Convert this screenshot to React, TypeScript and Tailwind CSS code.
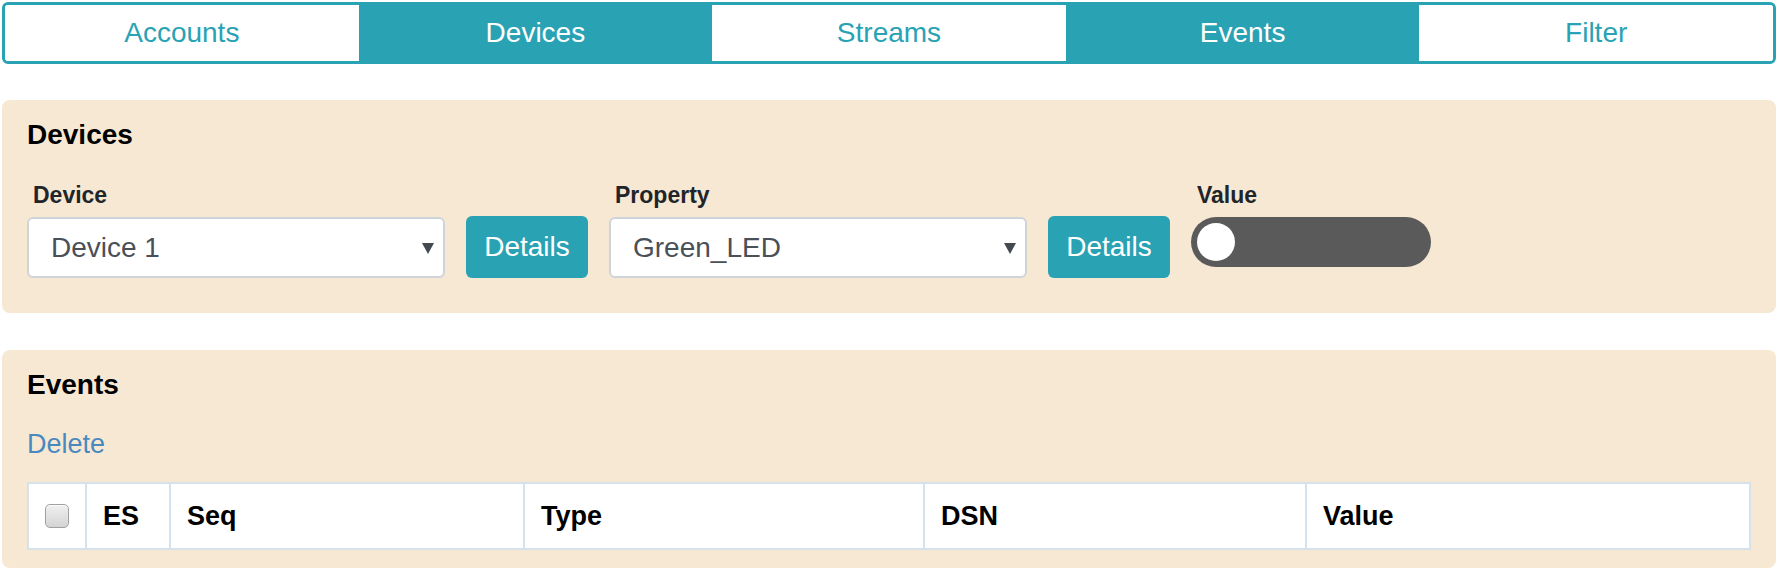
import React from "react";

const tabs = [
  { name: "Accounts", active: false },
  { name: "Devices", active: true },
  { name: "Streams", active: false },
  { name: "Events", active: true },
  { name: "Filter", active: false },
];

function Select({ value }: { value: string }) {
  return (
    <div className="relative flex h-[61px] w-[418px] items-center rounded-[6px] border-2 border-[#cfd4da] bg-white pl-[22px] text-[28px] text-[#495057]">
      <span>{value}</span>
      <svg
        className="absolute right-[9px] top-[24px]"
        width="12"
        height="11"
        viewBox="0 0 12 11"
      >
        <polygon points="0,0 12,0 6,11" fill="#444a50" />
      </svg>
    </div>
  );
}

function DetailsButton() {
  return (
    <button className="flex h-[62px] w-[122px] items-center justify-center rounded-[6px] bg-[#29a2b4] text-[28px] text-white">
      Details
    </button>
  );
}

function Label({ children }: { children: React.ReactNode }) {
  return (
    <div className="pl-[6px] text-[23px] font-bold leading-[1.2] text-[#212529]">
      {children}
    </div>
  );
}

export default function App() {
  return (
    <div
      className="h-[572px] w-[1778px] overflow-hidden bg-white"
      style={{ fontFamily: '"Liberation Sans", Arial, sans-serif' }}
    >
      {/* Tab bar */}
      <div className="mx-[2px] mt-[2px] grid h-[62px] grid-cols-5 overflow-hidden rounded-[6px] border-[3px] border-[#29a2b4]">
        {tabs.map((t) => (
          <div
            key={t.name}
            className={
              t.active
                ? "flex items-center justify-center bg-[#29a2b4] text-[28px] text-white"
                : "flex items-center justify-center bg-white text-[28px] text-[#29a2b4]"
            }
          >
            {t.name}
          </div>
        ))}
      </div>

      {/* Devices panel */}
      <div className="mx-[2px] mt-[36px] h-[213px] rounded-[8px] bg-[#f7e8d3] pl-[25px] pr-[23px] pt-[18px]">
        <div className="text-[28px] font-bold leading-[1.2] text-black">Devices</div>
        <div className="mt-[30px] flex items-end gap-[21px]">
          <div className="flex flex-col gap-[8px]">
            <Label>Device</Label>
            <Select value="Device 1" />
          </div>
          <DetailsButton />
          <div className="flex flex-col gap-[8px]">
            <Label>Property</Label>
            <Select value="Green_LED" />
          </div>
          <DetailsButton />
          <div className="flex flex-col gap-[8px] self-start">
            <Label>Value</Label>
            <div className="flex h-[50px] w-[240px] items-center rounded-full bg-[#5a5a5a] pl-[6px]">
              <div className="h-[38px] w-[38px] rounded-full bg-white" />
            </div>
          </div>
        </div>
      </div>

      {/* Events panel */}
      <div className="mx-[2px] mt-[37px] h-[218px] rounded-[8px] bg-[#f7e8d3] pl-[25px] pr-[23px] pt-[18px]">
        <div className="text-[28px] font-bold leading-[1.2] text-black">Events</div>
        <div className="mt-[26px] text-[27px] leading-[1.2] text-[#4a89c0]">Delete</div>
        <div className="mt-[22px] flex h-[68px] w-[1724px] border-2 border-[#d5e2ec] bg-white text-[27px] font-bold text-black">
          <div className="flex w-[58px] items-center justify-center border-r-2 border-[#d5e2ec]">
            <div className="h-[24px] w-[24px] rounded-[5px] border border-[#a0a0a0] bg-gradient-to-b from-[#f0f0f0] to-[#d4d4d4] shadow-[inset_0_1px_1px_rgba(255,255,255,0.8)]" />
          </div>
          <div className="flex w-[84px] items-center border-r-2 border-[#d5e2ec] pl-[16px]">ES</div>
          <div className="flex w-[354px] items-center border-r-2 border-[#d5e2ec] pl-[16px]">Seq</div>
          <div className="flex w-[400px] items-center border-r-2 border-[#d5e2ec] pl-[16px]">Type</div>
          <div className="flex w-[382px] items-center border-r-2 border-[#d5e2ec] pl-[16px]">DSN</div>
          <div className="flex flex-1 items-center pl-[16px]">Value</div>
        </div>
      </div>
    </div>
  );
}
